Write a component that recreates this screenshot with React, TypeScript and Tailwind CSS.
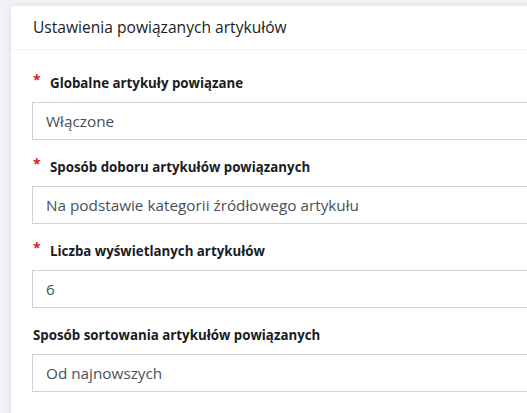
import React from "react";

const fields = [
  { label: "Globalne artykuły powiązane", value: "Włączone", required: true },
  { label: "Sposób doboru artykułów powiązanych", value: "Na podstawie kategorii źródłowego artykułu", required: true },
  { label: "Liczba wyświetlanych artykułów", value: "6", required: true },
  { label: "Sposób sortowania artykułów powiązanych", value: "Od najnowszych", required: false },
];

export default function App() {
  return (
    <div
      className="w-[527px] h-[413px] overflow-hidden bg-[#f1f2f6] pt-[6px] pl-[11px]"
      style={{ fontFamily: '"Open Sans", "Noto Sans", sans-serif' }}
    >
      <div className="w-[600px] h-[500px] bg-white shadow-[0_0_8px_rgba(0,0,0,0.08)]">
        <div className="h-[44px] border-b border-[#f0f1f4] pl-[22px] flex items-center">
          <span className="text-[15.6px] text-[#1a1d23]">Ustawienia powiązanych artykułów</span>
        </div>
        <div className="pl-[21px] pt-[24px] flex flex-col gap-[18px]">
          {fields.map((f) => (
            <div key={f.label} className="flex flex-col gap-[8px]">
              <div className="h-[20px] flex items-center pl-[1px]">
                {f.required && (
                  <span className="text-[#d71920] text-[14px] font-bold leading-none w-[17px] -mt-[9px]">*</span>
                )}
                <span className="text-[13.3px] font-bold text-[#1a1c24]">{f.label}</span>
              </div>
              <div className="h-[38px] border border-[#cfd3d9] flex items-center pl-[13px]">
                <span className="text-[15.3px] text-[#4a4f57]">{f.value}</span>
              </div>
            </div>
          ))}
        </div>
      </div>
    </div>
  );
}
